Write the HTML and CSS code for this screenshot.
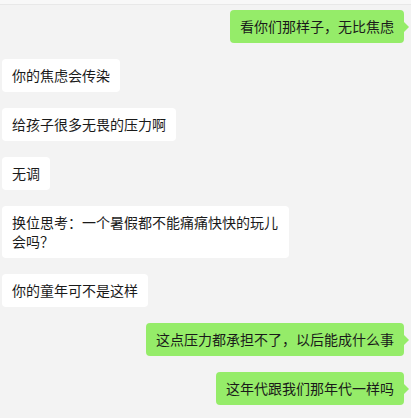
FILE: index.html
```html
<!DOCTYPE html>
<html lang="zh-CN">
<head>
  <meta charset="UTF-8">
  <meta name="viewport" content="width=device-width, initial-scale=1.0">
  <title>聊天记录</title>
  <link rel="stylesheet" href="styles.css">
</head>
<body>
  <div class="topbar"></div>
  <div class="chat">
    <div class="msg mine"><div class="bubble">看你们那样子，无比焦虑</div></div>
    <div class="msg"><div class="bubble">你的焦虑会传染</div></div>
    <div class="msg"><div class="bubble">给孩子很多无畏的压力啊</div></div>
    <div class="msg"><div class="bubble">无调</div></div>
    <div class="msg"><div class="bubble">换位思考：一个暑假都不能痛痛快快的玩儿会吗？</div></div>
    <div class="msg"><div class="bubble">你的童年可不是这样</div></div>
    <div class="msg mine"><div class="bubble">这点压力都承担不了，以后能成什么事</div></div>
    <div class="msg mine"><div class="bubble">这年代跟我们那年代一样吗</div></div>
  </div>
</body>
</html>
```

FILE: styles.css
```css
body {
  margin: 0;
  background: #f3f3f3;
  font-family: "Noto Sans CJK SC", "Noto Sans", sans-serif;
  color: #1a1a1a;
  overflow: hidden;
}
.topbar {
  height: 4px;
  background: #f8f8f8;
  border-bottom: 1px solid #e8e8e8;
}
.chat {
  display: flex;
  flex-direction: column;
  gap: 16px;
  padding: 5px 7px 0 2px;
}
.msg {
  display: flex;
}
.msg.mine {
  justify-content: flex-end;
}
.bubble {
  position: relative;
  box-sizing: border-box;
  max-width: 287px;
  padding: 7px 10px;
  font-size: 14px;
  line-height: 19px;
  background: #fff;
  border-radius: 4px;
}
.mine .bubble {
  background: #95ec69;
}
.mine .bubble::after {
  content: "";
  position: absolute;
  right: -5px;
  top: 12px;
  border-top: 5px solid transparent;
  border-bottom: 5px solid transparent;
  border-left: 5px solid #95ec69;
}
```
